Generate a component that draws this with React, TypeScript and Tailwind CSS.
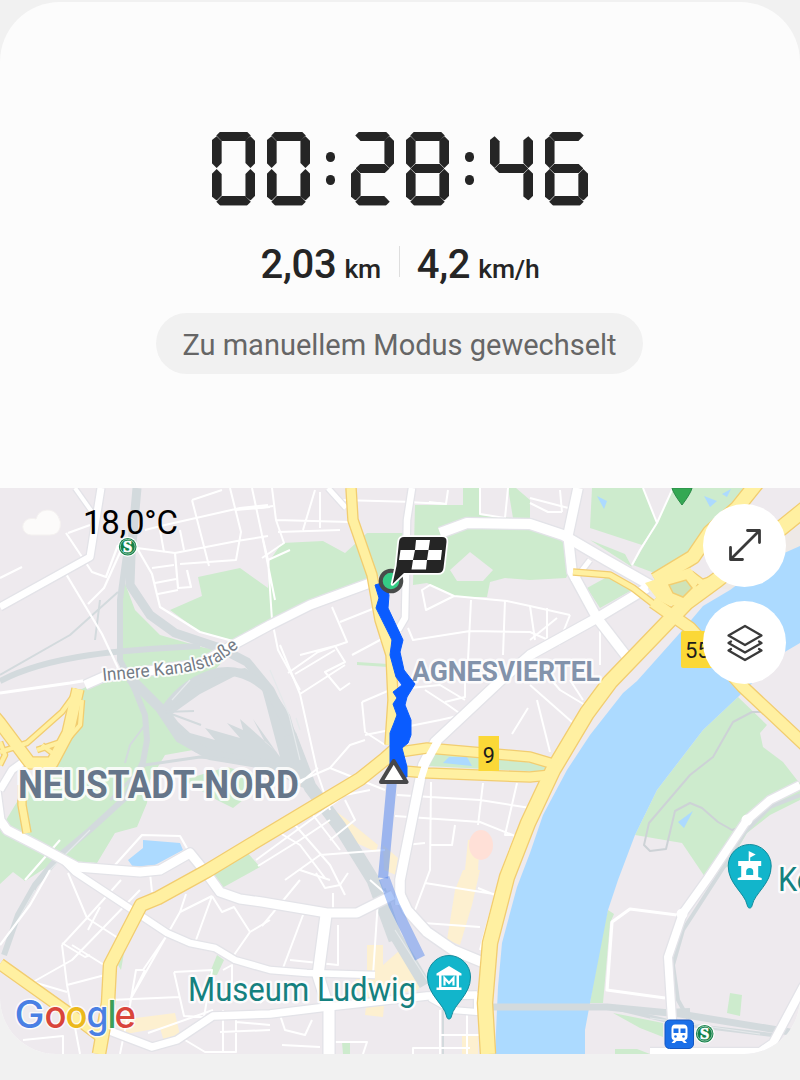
import clsx from "clsx";

// Segments lit for each digit, in the usual a-g order.
const SEGMENTS: Record<string, string> = {
  "0": "abcdef",
  "2": "abdeg",
  "4": "bcfg",
  "6": "acdefg",
  "8": "abcdefg",
};

const H_SEG =
  "h-[9.8px] w-[34.5px] justify-self-center [clip-path:polygon(0_42%,4px_0,30.5px_0,100%_42%,29px_100%,5.5px_100%)]";
const V_SEG =
  "w-[10px] h-[31.6px] [clip-path:polygon(50%_0,100%_5px,100%_26.6px,50%_100%,0_26.6px,0_4px)]";

const SEGMENT_CLASSES: Record<string, string> = {
  a: clsx(H_SEG, "self-start"),
  b: clsx(V_SEG, "mt-[4.8px] justify-self-end self-start"),
  c: clsx(V_SEG, "mb-[4.8px] -scale-y-100 justify-self-end self-end"),
  d: clsx(H_SEG, "-scale-y-100 self-end"),
  e: clsx(V_SEG, "mb-[4.8px] -scale-y-100 justify-self-start self-end"),
  f: clsx(V_SEG, "mt-[4.8px] justify-self-start self-start"),
  g: "h-[9.4px] w-[34px] self-center justify-self-center [clip-path:polygon(0_50%,5px_0,29px_0,100%_50%,29px_100%,5px_100%)]",
};

function Digit({ value }: { value: string }) {
  return (
    <div className="grid h-[74px] w-[43.8px] grid-cols-1 grid-rows-1">
      {SEGMENTS[value].split("").map((s) => (
        <span
          key={s}
          className={clsx("col-start-1 row-start-1 bg-[#252525]", SEGMENT_CLASSES[s])}
        />
      ))}
    </div>
  );
}

function Colon() {
  return (
    <div className="flex h-[74px] w-[9.8px] flex-col items-center justify-center gap-[12.6px]">
      <span className="size-[9.8px] rounded-full bg-[#252525]" />
      <span className="size-[9.8px] rounded-full bg-[#252525]" />
    </div>
  );
}

function Timer({ time }: { time: string }) {
  const [h, m, s] = time.split(":");
  const pair = (v: string) => (
    <div className="flex gap-[11.2px]">
      {v.split("").map((c, i) => (
        <Digit key={i} value={c} />
      ))}
    </div>
  );
  return (
    <div role="timer" aria-label={time} className="flex items-center justify-center gap-[15.2px]">
      {pair(h)}
      <Colon />
      {pair(m)}
      <Colon />
      {pair(s)}
    </div>
  );
}

const PARKS = [
  "M170 610L202 596L198 577L240 568L268 588L270 560L282 543L323 541L345 553L367 533H404V565L370 580L262 627L236 641L200 632Z",
  "M415 505L463 505V488H480V515L513 518L508 488H516L530 500V524L562 532L575 560L566 578L530 580L505 578L490 582L487 597H457L427 583L413 585Z",
  "M592 488H643L657 523L642 545L590 528Z",
  "M673 488H743L735 505L707 528L693 552L657 574L633 565L657 523Z",
  "M587 588L607 577L632 590L600 608Z",
  "M590 540L625 554L632 567Z",
  "M123 578L135 610L160 635L205 648L232 650L215 670L180 690L163 710L178 735L193 750L165 755L150 780L147 803L137 827L115 833L103 853L97 863L58 860L25 881L13 872L0 884V830L20 797L60 745L80 690L120 670Z",
  "M183 780L227 767L255 775L253 792L233 808L217 800Z",
  "M213 872L247 852L260 867L222 888Z",
  "M738 697L767 725L760 733L763 747L783 762L797 780L800 783V800L770 815L747 833L727 867L705 877L682 843L635 835L657 790L703 730Z",
  "M608 910L614 914L610 923L603 1003H590L598 950Z",
  "M730 993L742 995L740 1016L727 1013Z",
  "M613 1013L663 1023V1037L640 1028ZM615 1049H637L650 1054H615Z",
  "M433 752L480 755L545 765V772L427 766Z",
  "M217 955L224 960L217 975H209ZM342 1042H350V1054H343ZM118 965L124 953L121 970Z",
  "M357 662L388 664V667L357 665Z",
];

const WATER = [
  "M800 546L773 558L730 590L703 606L687 625L637 681L623 693L590 735L567 770L543 815L530 853L517 887L502 943L498 987L495 1054H585V1030L590 1003L608 910L618 880L635 835L657 790L703 730L738 697L783 653L800 643Z",
  "M143 840L180 843L183 850L155 865L133 867L128 860L143 848Z",
  "M443 763L449 757H467L472 766Z",
  "M597 496L607 501L604 509ZM704 496L717 501L710 507ZM722 494L731 489L727 497ZM693 811L684 828L678 822Z",
];

const RAILS: [string, number][] = [
  ["M137 488L131 555L130 585L150 615L175 633L220 648L247 662L270 690L292 735L310 785", 9],
  ["M126 555L120 600V660L135 690L145 715L147 740L143 762L125 798L90 830L60 855L35 885L18 915L4 955", 6],
  ["M0 681C50 655 120 650 200 646", 6],
  ["M0 675L70 635L118 592", 2],
  ["M130 678L160 708L180 738L210 755L270 765", 10],
  ["M165 710Q185 680 220 672Q245 668 268 690", 9],
  ["M290 735L310 787L340 827L373 880L395 940", 13],
  ["M110 800L145 765L200 757L280 765", 3],
  ["M380 890L395 935L425 985", 12],
  ["M493 1007H607L680 1014L790 1032", 7],
  ["M607 1006L680 1024L780 1036M690 1010L640 1012", 4],
  ["M800 795L770 807L745 832L725 865L683 930L673 965L678 1000L688 1018", 4],
  ["M443 985V1054M100 600L95 640M125 763L130 745L145 725", 2],
];

const PATHS =
  "M770 712H752L733 722L713 757L690 775L649 823L644 845L650 851L666 849L675 811L690 803L702 808L718 822L732 830L745 826";

const STREETS: [string, number][] = [
  ["M66 533L92 572L106 577L118 545M68 533L90 525M66 574L102 634L118 668M88 604L104 588L122 548", 2.2],
  ["M137 548L152 574L160 607L200 632L240 643M137 548L175 553L178 588L191 587L187 570M152 568L174 565M155 583L176 579M158 594L178 590", 2.2],
  ["M192 500L222 490M192 500L209 566M145 530L165 525L240 508L268 505M175 553L237 541L268 536M230 488L241 532L236 560L180 564M160 530L164 552M180 530L184 550M252 488L262 535L268 560L290 550M236 510L270 507", 2],
  ["M272 488L276 520L284 543L262 558M276 520L350 522M278 532L340 530M315 490L303 530M320 492V528M260 508L273 506M340 500L415 502M268 560L272 620L278 650L300 690M262 535L275 600", 2],
  ["M429 502L446 504L448 490M407 502L446 504M480 488V514L505 518L508 488M530 503L548 512H562M560 490L562 512", 2],
  ["M643 488L657 523L640 550L632 565M672 490L657 523M576 510L530 498", 2],
  ["M422 590L426 610L454 596L430 585ZM454 596L475 598L507 601L530 606L570 615M471 600L468 660M505 600L503 655M408 628L413 640L470 631L530 632L560 645M332 607L347 642L318 652L288 673M340 622L375 608M352 655L380 640L402 625M300 655L335 646L345 662L325 672L340 690L350 683", 2],
  ["M530 606L535 640M547 608V640M570 615L560 640M557 618L530 640M600 630V665M530 655L560 690L585 705M530 685L572 722M537 700L550 752M570 680L583 700", 2],
  ["M280 645L300 694L318 775L330 810M295 674L335 650M300 694L345 665M362 702L390 690L440 685L465 700M362 702L365 732L385 745M365 735L440 720L462 715L448 705L425 690M390 712L400 718M465 680V697L445 702M528 708L512 734M330 768L350 745L365 740", 2],
  ["M290 785L330 768L385 790M300 783L318 768M256 860L345 795L370 790M280 833L300 845L325 878M295 825L330 865L345 895M313 815L340 850M258 866L300 840L330 820M285 880L320 855L385 850M345 800L355 820L330 840M300 870L330 880", 2],
  ["M397 795L480 800L530 808M431 782L430 870L415 910M483 783L478 825M517 783L505 835L512 835M395 816L480 822L515 836M430 845H452L455 825M515 836L502 870L480 950M425 883L500 895M423 923L480 927M478 888L495 895M405 845L425 843", 2],
  ["M262 926L300 880M303 915L283 968M290 960L338 965V925M333 893V910M370 880L385 893M316 873L325 888L340 885L348 873M378 900L373 975", 2],
  ["M68 873L87 918L62 945M121 880L87 918L118 938M140 890L72 960L33 982M72 945L104 965M62 943L85 957L90 955M62 945L67 985L80 1054M67 985L105 975M33 982L67 992M100 907L88 930M23 1040L63 1036V1054M150 873L152 892M186 894L180 912L130 1000L145 970M212 896L222 912L234 907L250 932L234 955M250 932L270 920M212 896L196 940M180 912L212 896M165 938L143 970L136 970L130 1005L120 1054", 2],
  ["M174 972L184 1016L204 1017L212 970L174 972M110 1000L180 997M148 1033L213 1010M185 1040L205 1052H236V1015M223 970L232 965V990M223 1010V1052M220 1032L270 1030M260 1003L268 995M236 1022L270 1025", 2],
  ["M280 1015L285 1030L305 1035L312 1020M282 1045L320 1047M335 1042L367 1042L363 1054M413 1054V1048H470M440 1010V1054M467 1015V1054M440 1035H480M333 1010V1054M345 1005L385 1002", 2],
  ["M50 870L30 905L0 945M25 880L60 840M115 865L142 835L180 836L188 850M0 578L22 567", 2.2],
  ["M677 915L630 909L612 922L607 990L665 998", 3.2],
  ["M0 693L70 683L100 678", 3],
];

const MAIN_STREETS: [string, number][] = [
  ["M0 607L90 557L101 488", 7],
  ["M75 488L92 512", 4],
  ["M85 685L103 677L200 664L233 645L270 625L310 605L370 583", 9],
  ["M412 488L407 520L405 618L398 630", 6.5],
  ["M328 488L346 508", 5],
  ["M440 533L467 523L530 524L563 535L606 560L650 585", 10],
  ["M578 488L568 535L572 572L597 618L627 657", 9.5],
  ["M573 582L590 560", 5],
  ["M400 905V880L410 830L423 765L435 742L498 683L530 655L597 618L647 588", 9.5],
  ["M-4 790L0 820L7 830L40 847L77 867L140 872L160 870L190 853L207 874L220 892L240 899L262 902L327 913L357 913L393 895", 9],
  ["M65 862L75 872L137 913L167 933L190 943L215 948L235 960L270 970L307 973L375 975", 6.5],
  ["M0 790L12 770L30 757", 7],
  ["M326 915L318 975L329 1010V1054", 11],
  ["M110 1031L152 1047L177 1040L213 1016L270 1014L327 1007L427 996L477 995", 7.5],
  ["M430 998L452 1010L477 1012V993", 6],
  ["M400 895L407 910L427 932L453 950L482 962", 10],
  ["M800 785L770 800L747 820L708 878L683 913L668 957L672 1020", 8],
  ["M804 985L773 1043L760 1052H650", 8],
];

const HIGHWAYS: [string, number][] = [
  ["M573 572L610 575L633 588L655 605", 5],
  ["M78 690L62 712L27 743L0 752M82 700L80 725L67 740L37 750M42 745L55 755", 4],
  ["M22 785V805L27 833", 7],
  ["M0 765L5 755L0 742", 4],
  ["M78 689L68 733L52 763H30L0 723L-6 716", 11],
  ["M0 964L80 1021L105 1040", 10],
  ["M351 488L353 520L372 575L380 620L391 655L393 700L390 745", 9],
  ["M393 753L427 748L530 757L557 765", 9],
  ["M393 770L427 773L530 777L550 775", 9],
  ["M99 1054L108 1003L110 965L141 905L158 898L207 871L250 845L360 779L385 759L395 750", 12],
  ["M757 483L737 508L710 532L693 557L655 580", 13],
  ["M690 574L702 583L717 578", 6],
  ["M653 602L690 628L743 687L806 746", 11],
  ["M806 508L717 580L687 602L610 682L587 713L553 770L528 823L507 877L490 943L485 1003L488 1054", 14],
  ["M666 588L684 603L693 590L676 578", 9],
];

const BUILDINGS = [
  "M327 805L345 818L378 845L376 852L350 840L327 822Z",
  "M463 870H480L472 905L460 945L447 940L455 890ZM468 840L480 838L478 870H465Z",
  "M367 945H383V965L400 950L410 965L425 975L418 990L385 995L383 1017L365 1015L367 998L350 985L367 970Z",
  "M120 1020L175 1013L180 1035L165 1045L160 1028L120 1035ZM462 1035H478V1054H462Z",
  "M383 845L398 858L396 875L384 870Z",
];

// A road is drawn twice, casing first, so that crossings merge.
function Roads({ items, casing, fill }: { items: [string, number][]; casing: string; fill: string }) {
  return (
    <g fill="none" strokeLinejoin="round">
      {items.map(([d, w]) => (
        <path key={d} d={d} stroke={casing} strokeWidth={w + 2.6} />
      ))}
      {items.map(([d, w]) => (
        <path key={d} d={d} stroke={fill} strokeWidth={w} />
      ))}
    </g>
  );
}

function SBahn({ x, y }: { x: number; y: number }) {
  return (
    <g>
      <circle cx={x} cy={y} r="10" fill="#fff" />
      <circle cx={x} cy={y} r="8.8" fill="#138047" />
      <circle cx={x} cy={y} r="7.4" fill="none" stroke="#fff" strokeWidth="0.5" />
      <text
        x={x}
        y={y + 5.4}
        fill="#fff"
        stroke="#fff"
        strokeWidth="0.7"
        textAnchor="middle"
        className="font-['Liberation_Serif',serif] text-[16.5px] font-bold"
      >
        S
      </text>
    </g>
  );
}

function Pin({ x, y, children }: { x: number; y: number; children: React.ReactNode }) {
  return (
    <g transform={`translate(${x} ${y})`}>
      <path
        d="M0 42C-1.5 42-2 41-2.5 39C-5 27-21.5 18-21.5 0A21.5 21.5 0 0 1 21.5 0C21.5 18 5 27 2.5 39C2 41 1.5 42 0 42Z"
        fill="#12b5cb"
        stroke="#128c9c"
        strokeWidth="1"
      />
      {children}
    </g>
  );
}

const LABEL = "font-[Roboto,sans-serif] [paint-order:stroke] [stroke-linejoin:round]";

const GOOGLE: [string, number, string, number][] = [
  ["G", 14.5, "#4a80e4", 30],
  ["o", 44.5, "#d9453b", 22],
  ["o", 65.5, "#ecb91c", 22],
  ["g", 86.5, "#4a80e4", 22],
  ["l", 107.5, "#3c9f57", 9],
  ["e", 114.5, "#d9453b", 21.5],
];

function RouteMap() {
  return (
    <svg viewBox="0 488 800 566" className="block h-[566px] w-full">
      <defs>
        <path id="kanal" d="M103 681L165 675Q206 671 222 660L242 645" />
      </defs>
      <rect y="488" width="800" height="566" fill="#eeeaee" />
      {PARKS.map((d) => (
        <path key={d} d={d} fill="#cdebcd" />
      ))}
      <path d="M470 552L493 570L483 581H457L450 570Z" fill="#eeeaee" />
      <path d="M800 525L773 545L720 588L730 590L800 548Z" fill="#eee9e6" />
      {BUILDINGS.map((d) => (
        <path key={d} d={d} fill="#fdf0d0" />
      ))}
      <ellipse cx="481" cy="845" rx="12" ry="15" fill="#ffe0d7" />
      {WATER.map((d) => (
        <path key={d} d={d} fill="#acdaff" />
      ))}

      {/* Railway yard */}
      <path
        d="M164 712L185 685L210 673L245 668L268 682L290 715L300 750L310 790L295 785L275 770L225 762L195 752L178 738Z"
        fill="#d3dadd"
      />
      <path
        d="M172 714L200 694L235 676L260 682L266 704L280 757L253 719L265 742L277 752L240 719L243 730L227 723L240 738L205 728L215 740L190 733L178 722Z"
        fill="#eeeaee"
      />
      <g fill="none" stroke="#d3dadd" strokeLinejoin="round">
        {RAILS.map(([d, w]) => (
          <path key={d} d={d} strokeWidth={w} />
        ))}
        <path d="M164 712L194 711M166 712L201 725" strokeWidth="2" />
      </g>
      <path
        d="M50 870L90 830M15 925L35 890M270 670L289 715L300 760M172 700L190 680M300 730L296 718M395 930L430 985M650 1018L760 1034"
        fill="none"
        stroke="#e5e9eb"
        strokeWidth="1.2"
      />
      <path d={PATHS} fill="none" stroke="#cdd2d6" strokeWidth="2" strokeLinejoin="round" />

      <g fill="none" stroke="#fff" strokeLinejoin="round">
        {STREETS.map(([d, w]) => (
          <path key={d} d={d} strokeWidth={w} />
        ))}
      </g>
      <Roads items={MAIN_STREETS} casing="#e3e3e8" fill="#fff" />
      <circle cx="747" cy="820" r="5.5" fill="#fff" />
      <circle cx="682" cy="914" r="5.5" fill="#fff" />
      <Roads items={HIGHWAYS} casing="#f2cd70" fill="#fff0a1" />
      <path d="M645 583L672 574L690 568L700 580L684 603L670 606L658 600Z" fill="#fff0a1" />
      <path d="M669 585L686 580L692 588L683 597L673 593Z" fill="#cfe3b8" stroke="#f2cd70" strokeWidth="1.5" />
      <path d="M424 766L438 741" stroke="#fff" strokeWidth="8" />
      <path d="M421 779L427 760" stroke="#fff" strokeWidth="7" />

      {/* Planned part of the track */}
      <path d="M392 780L383 878" stroke="#4a80ee" strokeOpacity="0.5" strokeWidth="10" />
      <path d="M384 878L394 905L420 958" fill="none" stroke="#4a80ee" strokeOpacity="0.45" strokeWidth="11" />

      <g className={LABEL} stroke="#fff" strokeOpacity="0.85">
        <text className="text-[18px]" fill="#747b85" strokeWidth="4">
          <textPath href="#kanal" textLength="143" lengthAdjust="spacingAndGlyphs">
            Innere Kanalstraße
          </textPath>
        </text>
        <text
          x="18"
          y="797.5"
          textLength="281"
          lengthAdjust="spacingAndGlyphs"
          className="text-[38px] font-bold"
          fill="#66768a"
          strokeWidth="6"
        >
          NEUSTADT-NORD
        </text>
        <text
          x="412"
          y="681"
          textLength="188"
          lengthAdjust="spacingAndGlyphs"
          className="text-[28px] font-bold"
          fill="#8393ab"
          strokeWidth="5"
        >
          AGNESVIERTEL
        </text>
        <text
          x="188"
          y="1000.5"
          textLength="228"
          lengthAdjust="spacingAndGlyphs"
          className="text-[33px]"
          fill="#15817f"
          strokeWidth="5"
        >
          Museum Ludwig
        </text>
        <text
          x="778"
          y="890.5"
          textLength="35"
          lengthAdjust="spacingAndGlyphs"
          className="text-[32.5px]"
          fill="#15817f"
          strokeWidth="5"
        >
          Ke
        </text>
      </g>

      {/* Road numbers */}
      <g className="font-[Roboto,sans-serif] text-[21.5px]" fill="#1c1c1c">
        <rect x="478.5" y="736" width="20.5" height="35" fill="#fbd837" />
        <text x="488.7" y="762.5" textAnchor="middle">
          9
        </text>
        <rect x="681" y="631" width="34" height="37" rx="2" fill="#fbd837" />
        <text x="685" y="658" className="text-[22px]">
          55
        </text>
      </g>

      {/* Recorded track */}
      <path
        d="M375 585L385 582L389 595L388 608L403 640L400 652L404 670L415 684L407 697L405 705L411 720L411 735L408 743L402 748L407 767V777H390V733L394 723L397 715L393 704L397 698L393 692L402 685L396 677L390 655L392 640L376 608L379 598Z"
        fill="#0a5cff"
        stroke="#0a5cff"
        strokeWidth="1"
      />
      <circle cx="391" cy="581" r="10.3" fill="#35cc86" stroke="#484b4a" strokeWidth="4" />
      <path
        d="M404 537H442Q447 537 446.5 542L443.5 568Q443 573 438 573H404L392.5 584L396.5 566L399 542Q399.5 537 404 537Z"
        fill="#252525"
        stroke="#fff"
        strokeWidth="3.5"
        paintOrder="stroke"
        strokeLinejoin="round"
      />
      <path
        d="M416 540H430L428.5 550H442L440.8 560H427L426 569.5H411.5L413 560H399L400.5 550H415Z"
        fill="#fff"
      />
      <path d="M415 550H428.5L427 560H413Z" fill="#252525" />
      <path
        d="M393.7 761L406.5 782H381Z"
        fill="#fff"
        stroke="#48484a"
        strokeWidth="4"
        strokeLinejoin="round"
      />

      <Pin x={449} y={977}>
        <path d="M0-11L12.5-3.5V-1.5H10V10.5H12.5V13H-12.5V10.5H-10V-1.5H-12.5V-3.5Z" fill="#fff" />
        <path d="M-7.5 10V-1.5H7.5V10Z" fill="#12b5cb" />
        <path d="M-4.5 8.5V1L0 6L4.5 1V8.5" fill="none" stroke="#fff" strokeWidth="2.2" />
      </Pin>
      <Pin x={749.7} y={866}>
        <path
          d="M-1-15L6-11.5L0.5-8.5V-5H11.5V0H8.5V11L12 12V14H-12V12L-8.5 11V0H-11.5V-5H-1Z"
          fill="#fff"
        />
        <path d="M-3.5 9V5.5A3.5 3.5 0 0 1 3.5 5.5V9Z" fill="#12b5cb" />
      </Pin>
      <path d="M672 488H692Q691 493 682 505Q673 493 672 488Z" fill="#34a853" stroke="#2a8a48" />

      <rect x="665" y="1020" width="28.5" height="28.5" rx="4.5" fill="#1a6fe8" stroke="#1557c0" />
      <path
        d="M675 1024.5H683.5Q687.5 1024.5 687.5 1029V1036Q687.5 1040 684.5 1040L687 1043H684L682 1041H676.5L674.5 1043H671.5L674 1040Q671.5 1040 671.5 1036V1029Q671.5 1024.5 675 1024.5Z"
        fill="#fff"
      />
      <path d="M673.5 1028.5H678.5V1033H673.5ZM680.5 1028.5H685.5V1033H680.5Z" fill="#1a6fe8" />
      <circle cx="675.5" cy="1036.5" r="1.3" fill="#1a6fe8" />
      <circle cx="683.5" cy="1036.5" r="1.3" fill="#1a6fe8" />
      <SBahn x={704.7} y={1033.7} />
      <SBahn x={127.7} y={546.7} />

      {/* Attribution */}
      <g
        className="font-[Inter,sans-serif] text-[37.5px] font-medium [paint-order:stroke] [stroke-linejoin:round]"
        stroke="#fff"
        strokeOpacity="0.8"
      >
        {GOOGLE.map(([ch, x, fill, w]) => (
          <text key={x} x={x} y="1027.5" fill={fill} textLength={w} lengthAdjust="spacingAndGlyphs" strokeWidth="3">
            {ch}
          </text>
        ))}
      </g>
    </svg>
  );
}

function Weather() {
  return (
    <div className="absolute top-[15px] left-[22px] flex items-center gap-[21px]">
      <svg viewBox="0 0 40 28" className="h-7 w-10">
        <path
          d="M9 26A8 8 0 0 1 9 9.5Q12 9 14 10A12 12 0 0 1 36 7Q40 13 38 19Q36 26 28 26Z"
          fill="#fcfbfa"
          stroke="#f4f1f0"
        />
      </svg>
      <span className="text-[33px] leading-10 tracking-[-0.2px] text-black">18,0°C</span>
    </div>
  );
}

function RoundButton({ label, children }: { label: string; children: React.ReactNode }) {
  return (
    <button
      aria-label={label}
      className="flex size-[83px] items-center justify-center rounded-full bg-white text-[#3a3a3a]"
    >
      <svg
        viewBox="0 0 40 40"
        className="size-10"
        fill="none"
        stroke="currentColor"
        strokeWidth="2.8"
        strokeLinecap="round"
        strokeLinejoin="round"
      >
        {children}
      </svg>
    </button>
  );
}

export default function App() {
  return (
    <div className="h-[1080px] w-[800px] overflow-hidden bg-[#f1f1f1] pt-0.5 font-[Roboto,sans-serif]">
      <main className="flex h-[1052px] flex-col overflow-hidden rounded-t-[60px] rounded-b-[56px] bg-[#fcfcfc]">
        <section className="flex h-[486px] shrink-0 flex-col items-center pt-[129.5px]">
          <Timer time="00:28:46" />
          <div className="mt-[35px] flex h-12 items-center font-medium text-[#252525]">
            <p className="flex items-baseline gap-[8px]">
              <span className="text-[40px] leading-12 tracking-[-0.3px]">2,03</span>
              <span className="text-[26.5px] tracking-[-0.3px]">km</span>
            </p>
            <span className="mr-[17px] ml-[18px] h-[31px] w-px -translate-y-[3px] bg-[#dedede]" />
            <p className="flex items-baseline gap-[8px]">
              <span className="text-[40px] leading-12 tracking-[-0.3px]">4,2</span>
              <span className="text-[26.5px] tracking-[-0.2px]">km/h</span>
            </p>
          </div>
          <p className="mt-[24px] mr-px flex h-[61.5px] w-[487px] items-center justify-center rounded-full bg-[#f1f1f1] pt-[5px] text-[29px] whitespace-nowrap text-[#666]">
            Zu manuellem Modus gewechselt
          </p>
        </section>

        <section className="relative h-[566px] shrink-0">
          <RouteMap />
          <Weather />
          <div className="absolute top-[15.5px] right-[14px] flex flex-col gap-[14.5px]">
            <RoundButton label="Karte vergrößern">
              <path d="M5.5 34.5L34.5 5.5M22.5 5.5H34.5V17.5M5.5 22.5V34.5H17.5" />
            </RoundButton>
            <RoundButton label="Kartenebenen">
              <g strokeWidth="2.3">
                <path d="M20 3L36.5 12.5L20 22L3.5 12.5Z" />
                <path d="M6 18.5L3.5 20L20 29.5L36.5 20L34 18.5" />
                <path d="M6 26L3.5 27.5L20 37L36.5 27.5L34 26" />
              </g>
            </RoundButton>
          </div>
        </section>
      </main>
    </div>
  );
}
